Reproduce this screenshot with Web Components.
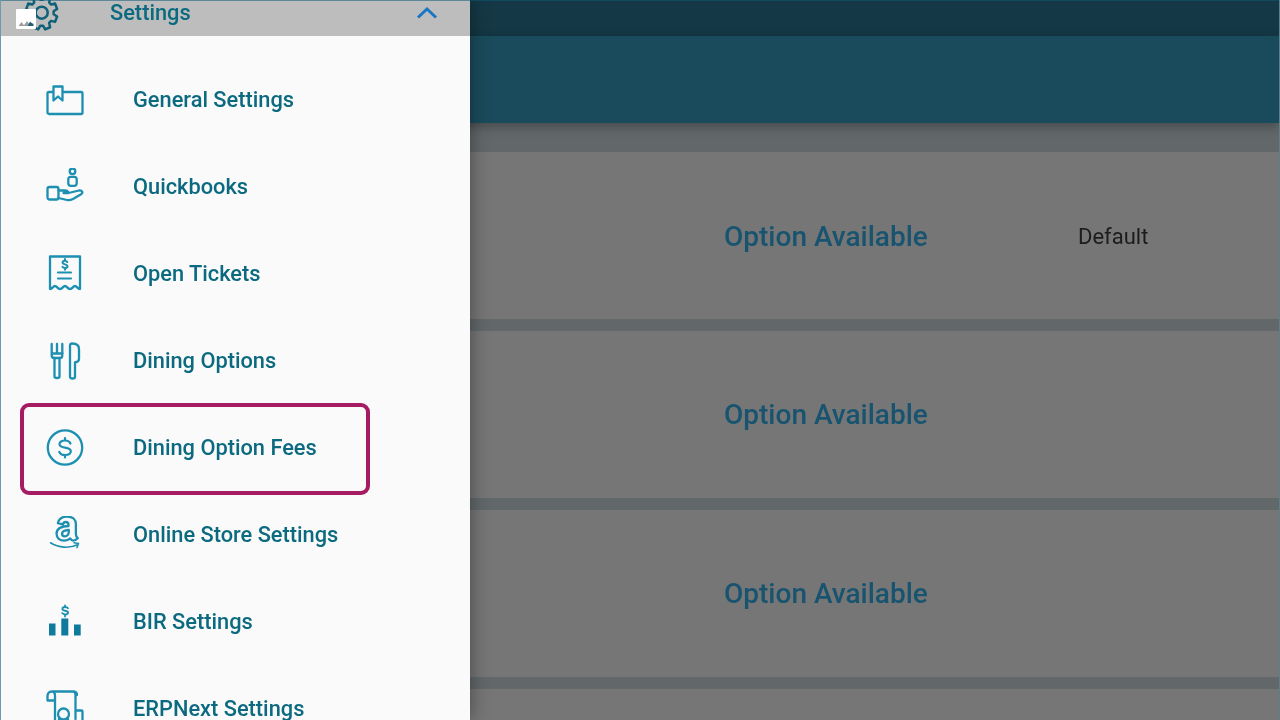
<!DOCTYPE html>
<html>
<head>
<meta charset="utf-8">
<style>
  html, body { margin: 0; height: 100%; overflow: hidden; background: #62686a; }
</style>
</head>
<body>
<app-shell>
  <option-card slot="main" label="Option Available" default-label="Default" nudge></option-card>
  <option-card slot="main" label="Option Available"></option-card>
  <option-card slot="main" label="Option Available"></option-card>
  <option-card slot="main"></option-card>

  <settings-drawer slot="drawer">
    <menu-row label="General Settings" icon="general"></menu-row>
    <menu-row label="Quickbooks" icon="quickbooks"></menu-row>
    <menu-row label="Open Tickets" icon="tickets"></menu-row>
    <menu-row label="Dining Options" icon="dining"></menu-row>
    <menu-row label="Dining Option Fees" icon="fees" marked></menu-row>
    <menu-row label="Online Store Settings" icon="store"></menu-row>
    <menu-row label="BIR Settings" icon="bir"></menu-row>
    <menu-row label="ERPNext Settings" icon="erp"></menu-row>
  </settings-drawer>
</app-shell>

<script>
const ICONS = {
  general: `<rect x="1.500" y="11" width="35" height="22" rx="1.500"/><path d="M7.500 19.500V5.500h9v14l-4.500-4z" fill="#fafafa"/>`,
  quickbooks: `<circle cx="26.500" cy="3.300" r="2.800"/><rect x="22.300" y="8.800" width="8.400" height="9" rx="2.500"/><rect x="1.500" y="19" width="11" height="12.500" rx="2"/><path d="M12.500 22.500h6.500c2 0 3 1 3.500 2.500h-5M22.500 25l10.500-2.500c3-.6 4.500 2.200 2 3.800l-8 4.700c-2 1-4 1.500-6 1l-8.500-2"/>`,
  tickets: `<path d="M4 1.500h30V34c-2.500 0-3-3-5-3s-2.500 3-5 3-3-3-5-3-2.500 3-5 3-3-3-5-3-2.500 3-5 3z"/><path d="M12 17.500h13M12 23.500h13" stroke-width="2.200"/><path d="M21.300 7c-.5-1-1.300-1.300-2.300-1.300-1.400 0-2.400.7-2.400 1.800 0 2.500 4.900 1.300 4.900 3.800 0 1.100-1.100 1.800-2.500 1.800-1 0-2-.4-2.500-1.300M19 4v1.700M19 13.100v1.700" stroke-width="2"/>`,
  dining: `<path d="M5.700 2v11.500c0 1.500 1 2.500 2.500 2.500h5.600c1.500 0 2.500-1 2.500-2.500V2M11 2v9.500M5.700 11.500h11"/><path d="M8.500 16v18.500c0 1 1 1.500 2.500 1.500s2.500-.5 2.500-1.500V16"/><path d="M24 3.500c0-1.500 1-2 2-2 4.500 0 7 1.500 7 5.500v10c0 2-1.500 3-4 3.500v14.500c0 1-1 1.500-2.500 1.500S24 35.500 24 34.500z"/>`,
  fees: `<circle cx="19" cy="18.500" r="17.200"/><path d="M24.500 14.500c-.8-1.900-2.700-3-5.500-3-3.200 0-5.500 1.500-5.500 3.700 0 4.800 11.300 2.200 11.300 7.100 0 2.200-2.400 3.700-5.700 3.700-2.900 0-5-1.200-5.800-3.200M19 9v2.500M19 26v2.500" stroke-width="2.200"/>`,
  store: `<g transform="translate(5.500 -1.200) scale(.92)"><path d="M7 9c.8-4 4-7 10-7 6.500 0 9.500 3.500 9.500 8v11c0 2 .5 3 2 4.500-1.500 1.500-3.500 2.500-5 2.500-1.300 0-2.400-1-3.300-2.300-1.500 1.500-3.700 2.300-6.200 2.300-5 0-8.500-2.700-8.500-7.500 0-5.500 5-8 13-8.300V11c0-2-.8-3.200-3-3.200-1.700 0-2.700.8-3.200 2.700z" stroke-width="2.500"/><path d="M18.800 16.500c-4.500.2-7.300 1.500-7.300 4.200 0 1.800 1.200 2.800 2.800 2.800 2.800 0 4.500-2.200 4.500-5z" stroke-width="2.500"/></g><path d="M4.500 26.800c8 5 19 6 27.500 1.700M28 26.800l4.500.7-1.500 4" stroke-width="1.600"/>`,
  bir: `<g fill="#0f7a9c" stroke="none"><rect x="3" y="20.500" width="6.500" height="12"/><rect x="15.300" y="15.500" width="7" height="17"/><rect x="28" y="21.500" width="6.700" height="11"/></g><path d="M22 5.300c-.6-.9-1.700-1.300-2.900-1.300-1.500 0-2.700.7-2.700 1.900 0 2.500 5.700 1.200 5.700 3.700 0 1.100-1.300 1.900-2.900 1.900-1.300 0-2.400-.5-3-1.400M19 2.300v1.700M19 11.500v2" stroke-width="1.800"/>`,
  erp: `<path d="M6 1.500C3 1.500 1.500 3.500 1.500 6v4.500H9M6 1.500c2 0 3 2 3 4.500v24M6 1.500h21c1.500 0 2.500 1.500 2.500 3.500v24M27 1.500c2 0 4 1 4 3.500M29.500 20.500h6a1 1 0 0 1 1 1V32"/><circle cx="17.500" cy="24" r="5.500"/><path d="M13 29v9M22 29v9"/>`
};

// 8 tooth cog, slightly taller than wide like the reference
function gearPath(cx, cy, rx, ry) {
  const pts = [];
  for (let i = 0; i < 8; i++) {
    const a = i * Math.PI / 4 + Math.PI / 8;
    for (const [d, r] of [[-.28, .76], [-.17, 1], [.17, 1], [.28, .76]]) {
      pts.push((cx + Math.cos(a + d) * rx * r).toFixed(2) + " " + (cy + Math.sin(a + d) * ry * r).toFixed(2));
    }
  }
  return "M" + pts.join("L") + "z";
}

class AppShell extends HTMLElement {
  constructor() {
    super();
    this.attachShadow({ mode: "open" });
    this.shadowRoot.innerHTML = `
    <style>
      :host {
        display: flex;
        flex-direction: column;
        position: relative;
        width: 1280px;
        height: 720px;
        overflow: hidden;
        box-sizing: border-box;
        border-right: 1px solid #5d7f8c;
        background: #62686a;
        filter: blur(.35px);
      }
      .status { flex: 0 0 36px; box-sizing: border-box; background: #143845; border-top: 1px solid #0f4a5f; }
      .bar { flex: 0 0 87px; background: #1a4b5c; box-shadow: 0 4px 10px rgba(0,0,0,.28); z-index: 1; }
      .list {
        display: flex;
        flex-direction: column;
        gap: 12px;
        padding-top: 29px;
      }
      .drawer {
        position: absolute;
        left: 0;
        top: 0;
        bottom: 0;
        width: 470px;
        z-index: 2;
      }
    </style>
    <div class="status"></div>
    <div class="bar"></div>
    <div class="list"><slot name="main"></slot></div>
    <div class="drawer"><slot name="drawer"></slot></div>`;
  }
}

class OptionCard extends HTMLElement {
  constructor() {
    super();
    this.attachShadow({ mode: "open" });
  }
  connectedCallback() {
    const label = this.getAttribute("label") || "";
    const def = this.getAttribute("default-label") || "";
    const nudge = this.hasAttribute("nudge") ? "padding-top: 2px;" : "";
    this.shadowRoot.innerHTML = `
    <style>
      :host {
        display: flex;
        align-items: center;
        box-sizing: border-box;
        height: 167px;
        flex: none;
        padding-left: 724px;
        ${nudge}
        background: #767676;
        font-family: Roboto, "Liberation Sans", sans-serif;
      }
      .name { width: 354px; color: #185470; font-size: 28px; font-weight: 500; }
      .def { color: #1c1c1c; font-size: 22px; }
    </style>
    <span class="name">${label}</span><span class="def">${def}</span>`;
  }
}

class SettingsDrawer extends HTMLElement {
  constructor() {
    super();
    this.attachShadow({ mode: "open" });
    this.shadowRoot.innerHTML = `
    <style>
      :host {
        display: block;
        height: 100%;
        box-sizing: border-box;
        background: #fafafa;
        border-left: 1px solid #6f9bad;
        box-shadow: 0 0 18px rgba(0,0,0,.4);
        overflow: hidden;
        font-family: Roboto, "Liberation Sans", sans-serif;
      }
      header {
        display: flex;
        align-items: center;
        height: 36px;
        box-sizing: border-box;
        padding: 0 32px 12px 24px;
        background: #bdbdbd;
        color: #0c6a80;
        font-size: 21.800px;
        font-weight: 500;
        border-top: 1px solid #5d8899;
      }
      .pic { position: relative; flex: none; width: 34px; height: 34px; margin-right: 51px; }
      .gear { position: absolute; left: 0; top: -3px; width: 34px; height: 38px; overflow: visible; fill: none; stroke: #0f6079; stroke-width: 2.500; stroke-linejoin: round; }
      .broken { position: absolute; left: -9px; top: 13px; width: 20px; height: 20px; }
      .title { flex: 1; }
      .chev { width: 22px; height: 14px; fill: none; stroke: #1976c4; stroke-width: 3; }
      .items { padding-top: 20px; }
    </style>
    <header>
      <div class="pic">
        <svg class="gear" viewBox="0 0 34 38">
          <path d="${gearPath(16.7, 19.7, 15.8, 17.2)}"/>
          <circle cx="16.700" cy="19.700" r="6"/>
        </svg>
        <svg class="broken" viewBox="0 0 20 20">
          <rect width="20" height="20" rx="1" fill="#fff"/>
          <path d="M2.500 17l3-4 3 4zM7.500 17l3.500-5 3.500 5z" fill="#9d9d9d"/>
          <path d="M12 17c.5-2 1.500-4 2.500-4.500.3 1 1.500 2 3 2.200V17z" fill="#245f70"/>
        </svg>
      </div>
      <span class="title">Settings</span>
      <svg class="chev" viewBox="0 0 22 14"><path d="M2 11.500l9-8.500 9 8.500"/></svg>
    </header>
    <div class="items"><slot></slot></div>`;
  }
}

class MenuRow extends HTMLElement {
  constructor() {
    super();
    this.attachShadow({ mode: "open" });
  }
  connectedCallback() {
    const label = this.getAttribute("label");
    const icon = ICONS[this.getAttribute("icon")];
    const mark = this.hasAttribute("marked") ? `<div class="mark"></div>` : "";
    this.shadowRoot.innerHTML = `
    <style>
      :host {
        display: flex;
        align-items: center;
        position: relative;
        height: 87px;
        padding-left: 45px;
        color: #0c6a80;
        font-size: 21.800px;
        font-weight: 500;
      }
      svg {
        flex: none;
        width: 38px;
        height: 38px;
        margin-right: 49px;
        fill: none;
        stroke: #1d8fb1;
        stroke-width: 2.300;
        stroke-linejoin: round;
        stroke-linecap: round;
      }
      .mark {
        position: absolute;
        left: 19px;
        top: -1px;
        width: 350px;
        height: 92px;
        box-sizing: border-box;
        border: 4px solid #a51c63;
        border-radius: 9px;
      }
    </style>
    <svg viewBox="0 0 38 38">${icon}</svg>
    <span>${label}</span>
    ${mark}`;
  }
}

customElements.define("app-shell", AppShell);
customElements.define("option-card", OptionCard);
customElements.define("settings-drawer", SettingsDrawer);
customElements.define("menu-row", MenuRow);
</script>
</body>
</html>
